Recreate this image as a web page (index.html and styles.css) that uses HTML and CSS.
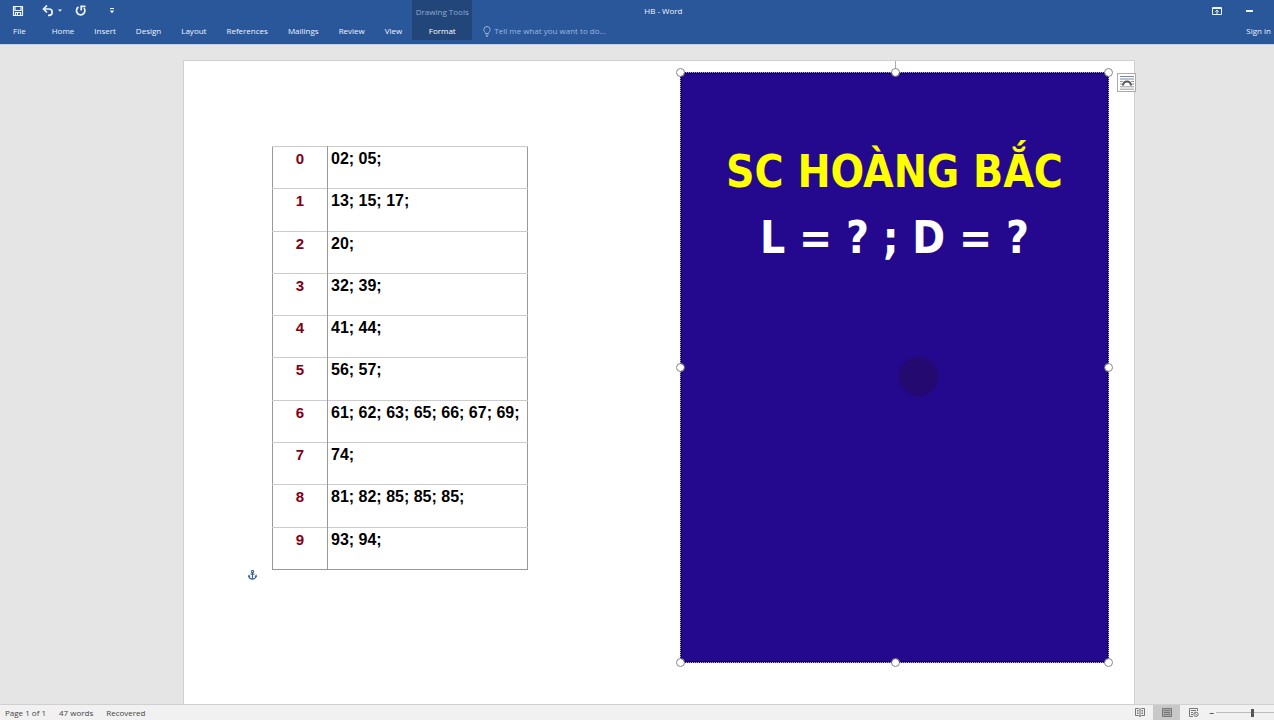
FILE: index.html
```html
<!DOCTYPE html>
<html lang="en">
<head>
<meta charset="utf-8">
<title>HB - Word</title>
<link rel="stylesheet" href="styles.css">
</head>
<body>
<div class="app">
  <header class="ribbon">
    <div class="ribbon-left">
      <div class="quick">
        <button class="icon-btn save" aria-label="Save"><svg width="12" height="12" viewBox="0 0 12 12" fill="none" stroke="currentColor" stroke-width="1.200"><path d="M1.500 1.500h9v9h-9zM3 1.500v4h6v-4M3.500 10.500v-3h5v3"/><path d="M5.500 8v2"/></svg></button>
        <button class="icon-btn undo" aria-label="Undo"><svg width="12" height="12" viewBox="0 0 12 12" fill="none" stroke="currentColor" stroke-width="1.700"><path d="M5 .5 1.500 4 5 7.500M1.800 4H7a3 3 0 0 1 0 6.300H6"/></svg></button>
        <button class="icon-btn drop" aria-label="Undo list"><svg width="4" height="3" viewBox="0 0 4 3" fill="currentColor"><path d="M0 .5h4L2 2.800z"/></svg></button>
        <button class="icon-btn redo" aria-label="Repeat"><svg width="12" height="12" viewBox="0 0 12 12" fill="none" stroke="currentColor" stroke-width="1.700"><path d="M3.500 2A4.200 4.200 0 1 0 9 3M6.200 5.500V1.300H10.500"/></svg></button>
        <button class="icon-btn custom" aria-label="Customize"><svg width="6" height="6" viewBox="0 0 6 6" fill="currentColor"><path d="M1 0h4v1H1zM.7 2.500h4.600L3 5.200z"/></svg></button>
      </div>
      <nav class="tabs">
        <button class="tab file">File</button><button class="tab">Home</button><button class="tab">Insert</button><button class="tab">Design</button><button class="tab">Layout</button><button class="tab">References</button><button class="tab">Mailings</button><button class="tab">Review</button><button class="tab">View</button>
      </nav>
    </div>
    <div class="context">
      <span class="context-name">Drawing Tools</span>
      <button class="tab context-tab">Format</button>
    </div>
    <div class="ribbon-right">
      <div class="title-row">
        <span class="title">HB - Word</span>
        <button class="icon-btn" aria-label="Ribbon display options"><svg width="10" height="8" viewBox="0 0 10 8" fill="none" stroke="currentColor"><path d="M.5.5h9v7h-9zM.5 1.500h9M5 7V3.500M3.300 4.800 5 3.200l1.700 1.600"/></svg></button>
        <button class="icon-btn minimize" aria-label="Minimize"><svg width="7" height="2" viewBox="0 0 7 2"><path d="M0 0h7v2H0z" fill="currentColor"/></svg></button>
      </div>
      <div class="tell-row">
        <label class="tell"><svg width="8" height="11" viewBox="0 0 8 11" fill="none" stroke="currentColor"><path d="M2.500 7.500C2.500 6 .8 5.500.8 3.700a3.200 3.200 0 0 1 6.400 0C7.200 5.500 5.500 6 5.500 7.500zM2.500 9h3M3 10.400h2"/></svg><input type="text" placeholder="Tell me what you want to do..." aria-label="Tell me what you want to do"></label>
        <button class="tab sign">Sign in</button>
      </div>
    </div>
  </header>

  <main class="workspace">
    <article class="page">
      <div class="table-wrap">
        <table class="numbers">
          <tbody>
            <tr><th scope="row">0</th><td>02; 05;</td></tr>
            <tr><th scope="row">1</th><td>13; 15; 17;</td></tr>
            <tr><th scope="row">2</th><td>20;</td></tr>
            <tr><th scope="row">3</th><td>32; 39;</td></tr>
            <tr><th scope="row">4</th><td>41; 44;</td></tr>
            <tr><th scope="row">5</th><td>56; 57;</td></tr>
            <tr><th scope="row">6</th><td>61; 62; 63; 65; 66; 67; 69;</td></tr>
            <tr><th scope="row">7</th><td>74;</td></tr>
            <tr><th scope="row">8</th><td>81; 82; 85; 85; 85;</td></tr>
            <tr><th scope="row">9</th><td>93; 94;</td></tr>
          </tbody>
        </table>
        <svg class="anchor" width="9" height="10" viewBox="0 0 9 10" fill="none" stroke="currentColor" stroke-width="1.200"><circle cx="4.500" cy="1.600" r="1.100"/><path d="M4.500 2.700v6.500M2.500 4.200h4M.7 5.800C1 8 2.500 9 4.500 9.200 6.500 9 8 8 8.300 5.800M.3 7 .9 5.600l1.200 1M8.700 7l-.6-1.400-1.200 1"/></svg>
      </div>
      <section class="shape">
        <h1 class="shape-title">SC HOÀNG BẮC</h1>
        <p class="shape-line">L = ? ; D = ?</p>
        <span class="click-mark"></span>
        <span class="rotate-line"></span>
        <span class="handle n w"></span><span class="handle n c"></span><span class="handle n e"></span>
        <span class="handle m w"></span><span class="handle m e"></span>
        <span class="handle s w"></span><span class="handle s c"></span><span class="handle s e"></span>
        <button class="layout-options" aria-label="Layout options"><svg width="14" height="14" viewBox="0 0 14 14" fill="none"><path d="M0 .5h14M0 3h14" stroke="#7789a5"/><path d="M0 5.500h3M11 5.500h3M0 8h2M12 8h2" stroke="#8a929e"/><path d="M3 9.500a4 4 0 0 1 8 0" stroke="#555" stroke-width="2.200"/><path d="M0 10.800h14M0 13.200h14" stroke="#999"/></svg></button>
      </section>
    </article>
  </main>

  <footer class="status">
    <span>Page 1 of 1</span><span>47 words</span><span>Recovered</span>
    <div class="views">
      <button class="view" aria-label="Read mode"><svg width="10" height="9" viewBox="0 0 10 9" fill="none" stroke="currentColor"><path d="M5 1.500v7M5 1.500 3.500.5h-3v7h3L5 8.500l1.500-1h3v-7h-3zM2 2.500h1.500M2 4h1.500M2 5.500h1.500M6.500 2.500H8M6.500 4H8M6.500 5.500H8"/></svg></button>
      <button class="view active" aria-label="Print layout"><svg width="10" height="9" viewBox="0 0 10 9" fill="#aaa" stroke="currentColor"><path d="M.5.5h9v8h-9zM2 2.500h6M2 4.500h6M2 6.500h6"/></svg></button>
      <button class="view" aria-label="Web layout"><svg width="10" height="9" viewBox="0 0 10 9" fill="none" stroke="currentColor"><path d="M4 8.500H.5v-8h8V3M2 2.500h5M2 4.500h2M2 6.500h2"/><circle cx="7" cy="6.300" r="2.200"/><path d="m5.500 4.800 3 3"/></svg></button>
    </div>
    <button class="zoom-out" aria-label="Zoom out">−</button>
    <input class="zoom" type="range" min="0" max="100" value="64" aria-label="Zoom">
  </footer>
</div>
</body>
</html>
```
FILE: styles.css
```css
* { box-sizing: border-box; }
body {
  margin: 0;
  font: 8px/12px "Open Sans", "Noto Sans", sans-serif;
  color: #444;
}
button, input { font: inherit; color: inherit; border: 0; padding: 0; background: none; }
svg { display: block; }

.app { height: 100vh; display: flex; flex-direction: column; overflow: hidden; }

/* Ribbon */
.ribbon {
  flex: none;
  height: 45px;
  display: flex;
  background: #2a579a;
  border-bottom: 1px solid #c3d0e6;
  color: #eef4ff;
}
.ribbon-left { display: flex; flex-direction: column; }
.quick { height: 21px; display: flex; align-items: center; padding-left: 12px; }
.undo { margin-left: 18px; }
.drop { margin-left: 4px; }
.redo { margin-left: 13px; }
.custom { margin-left: 22px; }
.tabs { display: flex; height: 20px; padding-left: 3px; }
.tab { padding: 0 10px; white-space: nowrap; }
.file { margin-right: 6px; }
.context {
  height: 40px;
  width: 60px;
  display: flex;
  flex-direction: column;
  align-items: center;
  background: #22457a;
}
.context-name { height: 21px; line-height: 24px; white-space: nowrap; color: #91abd3; }
.context-tab { height: 20px; color: #fff; }
.ribbon-right { flex: 1; display: flex; flex-direction: column; }
.title-row { height: 21px; display: flex; align-items: center; padding: 1px 21px 0 172px; }
.title { flex: 1; }
.minimize { margin-left: 24px; }
.tell-row { height: 20px; display: flex; justify-content: space-between; align-items: center; padding-left: 11px; }
.tell { display: flex; align-items: center; gap: 3px; color: #91b0e0; }
.tell input { width: 160px; }
.tell input::placeholder { color: #9bb6e2; }
.sign { padding: 0 3px; }

/* Document */
.workspace {
  flex: 1;
  min-height: 0;
  display: flex;
  background: #e5e5e5;
  padding: 15px 139px 0 183px;
}
.page {
  flex: 1;
  display: flex;
  justify-content: space-between;
  background: #fff;
  border: 1px solid #d0d0d0;
  border-bottom: 0;
  padding: 11px 25px 0 88px;
}
.table-wrap { position: relative; align-self: flex-start; margin-top: 74px; }
.numbers {
  width: 256px;
  height: 424px;
  border-collapse: collapse;
  border: 1px solid #999;
  font: bold 16px/20px "Liberation Sans", Arial, sans-serif;
  color: #000;
}
.numbers th, .numbers td {
  border-top: 1px solid #ccc;
  vertical-align: top;
  padding: 2px 3px 0;
  text-align: left;
  white-space: nowrap;
}
.numbers th {
  width: 55px;
  border-right: 1px solid #999;
  font-size: 15px;
  text-align: center;
  color: #800014;
}
.anchor { position: absolute; left: -24px; bottom: -10px; color: #3f648f; }

.shape {
  position: relative;
  width: 429px;
  height: 591px;
  background: #24098e;
  border: 1px dotted #a9a4cc;
  outline: 1px solid #150650;
  outline-offset: -2px;
  padding-top: 66px;
  text-align: center;
  font-family: "DejaVu Sans Condensed", "DejaVu Sans", sans-serif;
  font-weight: bold;
}
.shape-title, .shape-line { margin: 0; font-size: 44px; line-height: 66px; white-space: nowrap; }
.shape-title { color: #ff0; }
.shape-line { color: #fff; }
.click-mark {
  position: absolute;
  left: 218px;
  top: 284px;
  width: 39px;
  height: 39px;
  border-radius: 50%;
  background: #240970;
  filter: blur(1px);
}
.rotate-line { position: absolute; left: 50%; top: -12px; height: 11px; border-left: 1px solid #aaa; }
.handle {
  position: absolute;
  width: 7px;
  height: 7px;
  border-radius: 50%;
  background: #fff;
  outline: 1px solid #888;
}
.n { top: -4px; }
.m { top: calc(50% - 4px); }
.s { bottom: -4px; }
.w { left: -4px; }
.c { left: calc(50% - 3px); }
.e { right: -4px; }
.layout-options {
  position: absolute;
  right: -28px;
  top: 0;
  width: 19px;
  height: 19px;
  display: grid;
  place-items: center;
  background: #fff;
  border: 1px solid #ababab;
}

/* Status bar */
.status {
  flex: none;
  height: 16px;
  display: flex;
  align-items: center;
  gap: 13px;
  padding-left: 5px;
  background: #f1f1f1;
  border-top: 1px solid #d0d0d0;
  overflow: hidden;
}
.views { margin-left: auto; display: flex; height: 16px; }
.view { width: 27px; display: grid; place-items: center; color: #777; }
.active { background: #c8c8c8; }
.zoom-out { margin-left: -11px; font-weight: bold; }
.zoom { appearance: none; width: 58px; height: 10px; margin: 0 0 0 -11px; background: linear-gradient(#bbb, #bbb) center / 100% 1px no-repeat; }
.zoom::-webkit-slider-thumb { appearance: none; width: 3px; height: 8px; background: #555; }
```
